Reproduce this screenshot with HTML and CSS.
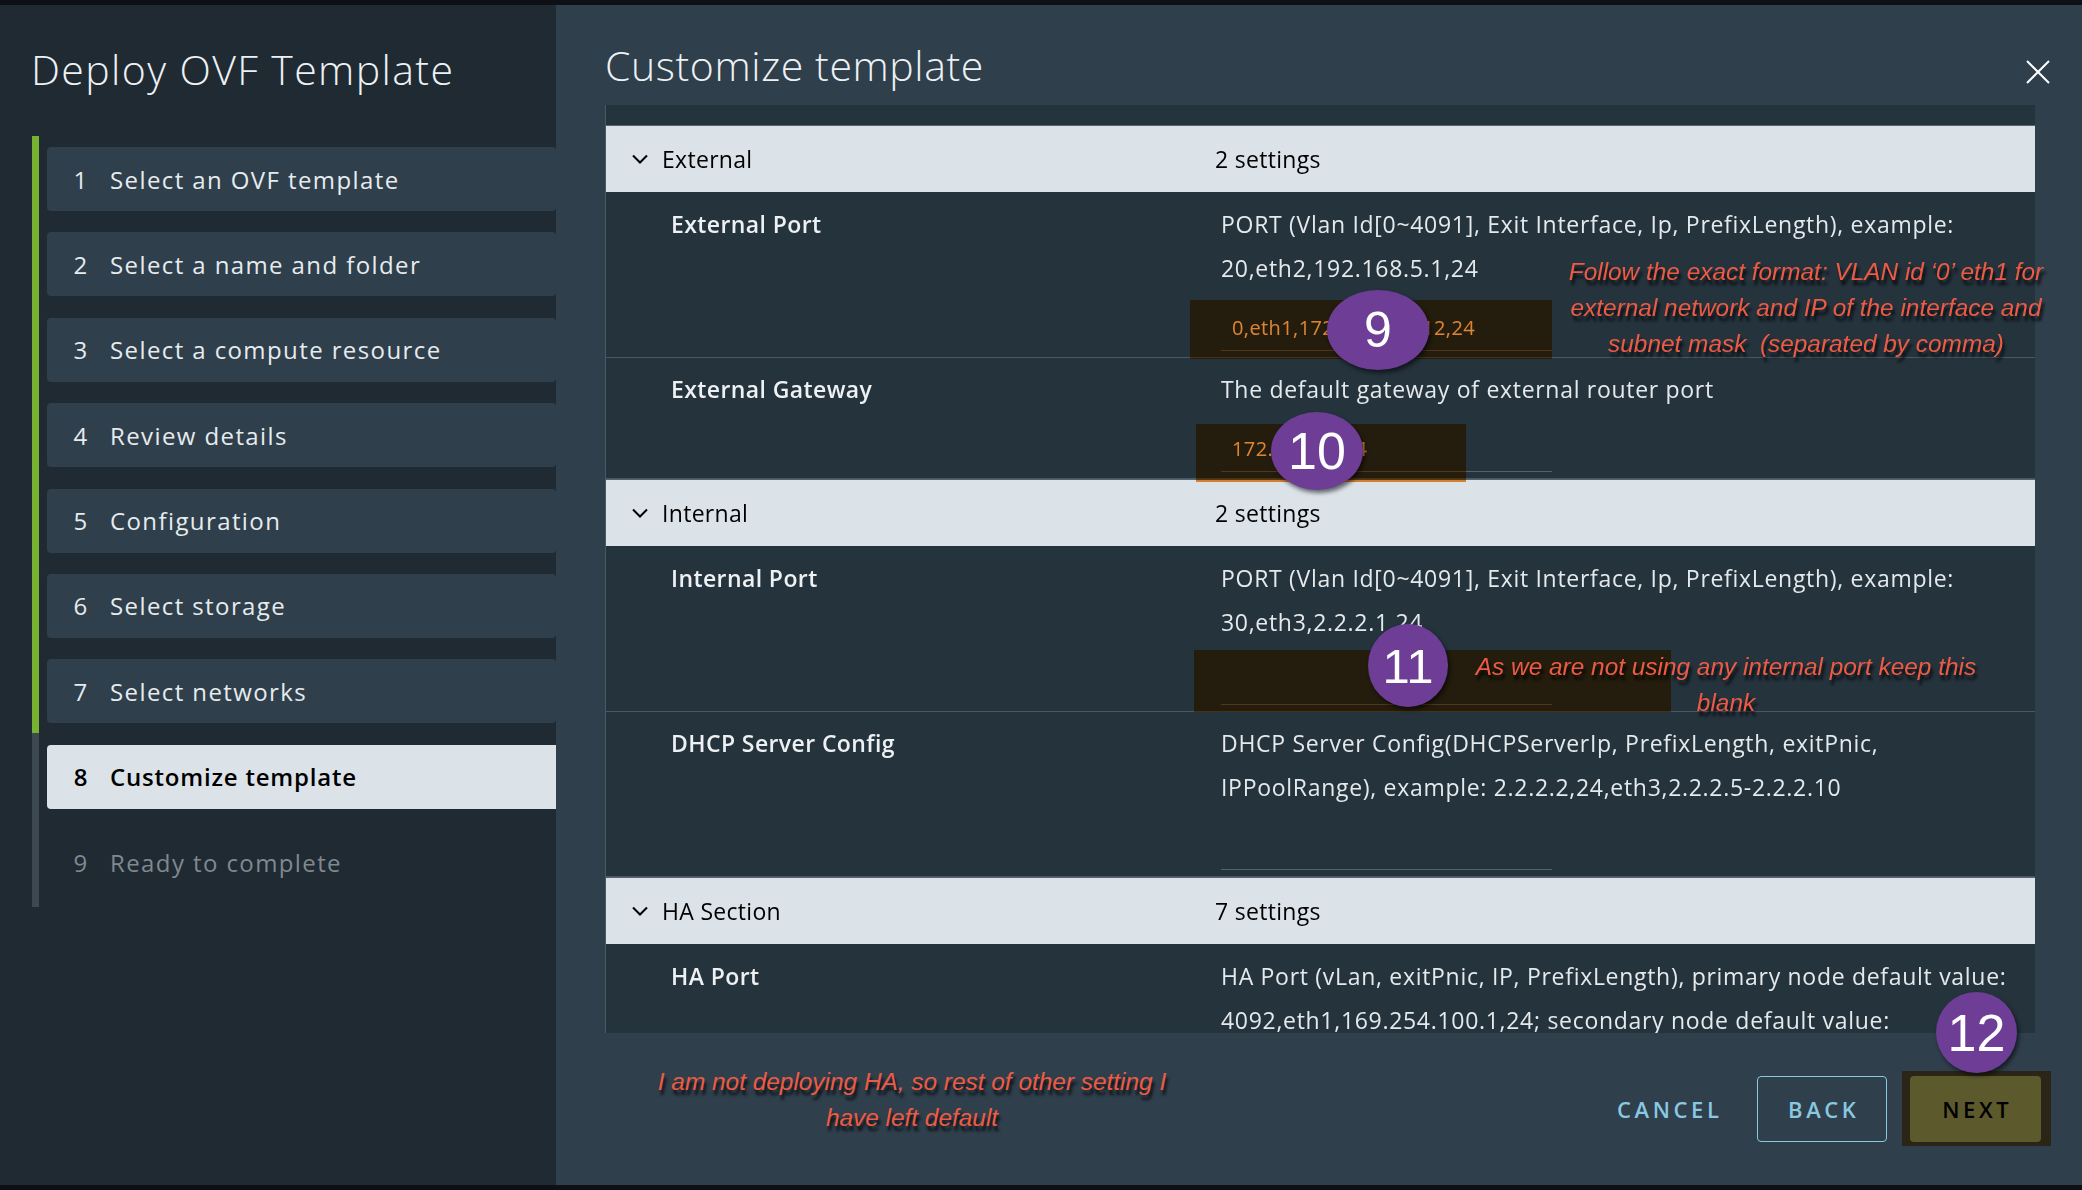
FILE: index.html
```html
<!DOCTYPE html>
<html lang="en">
<head>
<meta charset="utf-8">
<title>Deploy OVF Template</title>
<link rel="stylesheet" href="styles.css">
</head>
<body>
<div class="app">
  <aside class="sidebar">
    <h1 class="wiz-title">Deploy OVF Template</h1>
    <div class="steps">
      <div class="rail"></div>
      <ol class="step-list">
        <li class="step"><span class="num">1</span><span class="lbl">Select an OVF template</span></li>
        <li class="step"><span class="num">2</span><span class="lbl">Select a name and folder</span></li>
        <li class="step"><span class="num">3</span><span class="lbl">Select a compute resource</span></li>
        <li class="step"><span class="num">4</span><span class="lbl">Review details</span></li>
        <li class="step"><span class="num">5</span><span class="lbl">Configuration</span></li>
        <li class="step"><span class="num">6</span><span class="lbl">Select storage</span></li>
        <li class="step"><span class="num">7</span><span class="lbl">Select networks</span></li>
        <li class="step active"><span class="num">8</span><span class="lbl">Customize template</span></li>
        <li class="step pending"><span class="num">9</span><span class="lbl">Ready to complete</span></li>
      </ol>
    </div>
  </aside>

  <main class="panel">
    <header class="panel-head">
      <h2 class="panel-title">Customize template</h2>
      <button class="close" aria-label="Close">
        <svg width="24" height="24" viewBox="0 0 24 24"><path d="M1 1 L23 23 M23 1 L1 23" stroke="#ffffff" stroke-width="2" fill="none"/></svg>
      </button>
    </header>

    <div class="table-wrap">
      <div class="table">
        <div class="table-top"></div>

        <div class="group-head">
          <svg class="chev" width="16" height="10" viewBox="0 0 16 10"><path d="M1 1.5 L8 8.5 L15 1.5" fill="none" stroke="#000" stroke-width="2"/></svg>
          <span class="g-name">External</span>
          <span class="g-count">2 settings</span>
        </div>
        <div class="prop">
          <div class="p-label">External Port</div>
          <div class="p-body">
            <span class="line">PORT (Vlan Id[0~4091], Exit Interface, Ip, PrefixLength), example:</span>
            <span class="line">20,eth2,192.168.5.1,24</span>
            <div class="p-input">0,eth1,172.16.100.112,24</div>
          </div>
        </div>
        <div class="prop">
          <div class="p-label">External Gateway</div>
          <div class="p-body">
            <span class="line">The default gateway of external router port</span>
            <div class="p-input">172.16.10.254</div>
          </div>
        </div>

        <div class="group-head">
          <svg class="chev" width="16" height="10" viewBox="0 0 16 10"><path d="M1 1.5 L8 8.5 L15 1.5" fill="none" stroke="#000" stroke-width="2"/></svg>
          <span class="g-name">Internal</span>
          <span class="g-count">2 settings</span>
        </div>
        <div class="prop">
          <div class="p-label">Internal Port</div>
          <div class="p-body">
            <span class="line">PORT (Vlan Id[0~4091], Exit Interface, Ip, PrefixLength), example:</span>
            <span class="line">30,eth3,2.2.2.1,24</span>
            <div class="p-input"></div>
          </div>
        </div>
        <div class="prop">
          <div class="p-label">DHCP Server Config</div>
          <div class="p-body">
            <span class="line">DHCP Server Config(DHCPServerIp, PrefixLength, exitPnic,</span>
            <span class="line">IPPoolRange), example: 2.2.2.2,24,eth3,2.2.2.5-2.2.2.10</span>
            <div class="p-input"></div>
          </div>
        </div>

        <div class="group-head">
          <svg class="chev" width="16" height="10" viewBox="0 0 16 10"><path d="M1 1.5 L8 8.5 L15 1.5" fill="none" stroke="#000" stroke-width="2"/></svg>
          <span class="g-name">HA Section</span>
          <span class="g-count">7 settings</span>
        </div>
        <div class="prop">
          <div class="p-label">HA Port</div>
          <div class="p-body">
            <span class="line">HA Port (vLan, exitPnic, IP, PrefixLength), primary node default value:</span>
            <span class="line">4092,eth1,169.254.100.1,24; secondary node default value:</span>
            <span class="line">4092,eth1,169.254.100.2,24</span>
            <div class="p-input">4092,eth1,169.254.100.1,24</div>
          </div>
        </div>
      </div>

      <div class="hl hl-9"></div>
      <div class="hl hl-10"></div>
      <div class="hl hl-11"></div>

      <span class="badge badge-9">9</span>
      <span class="badge badge-10">10</span>
      <span class="badge badge-11">11</span>

      <p class="note note-9">Follow the exact format: VLAN id ‘0’ eth1 for<br>external network and IP of the interface and<br>subnet mask&nbsp; (separated by comma)</p>
      <p class="note note-11">As we are not using any internal port keep this<br>blank</p>
    </div>

    <footer class="panel-foot">
      <p class="note note-foot">I am not deploying HA, so rest of other setting I<br>have left default</p>
      <div class="actions">
        <button class="btn btn-flat">CANCEL</button>
        <button class="btn btn-outline">BACK</button>
        <div class="next-hl">
          <button class="btn btn-next">NEXT</button>
          <span class="badge badge-12">12</span>
        </div>
      </div>
    </footer>
  </main>
</div>
</body>
</html>
```

FILE: styles.css
```css
html, body {
  margin: 0;
  padding: 0;
}

body {
  background: #0d1115;
  font-family: "Open Sans", "Noto Sans", sans-serif;
  width: 2082px;
  height: 1190px;
  overflow: hidden;
}

.app {
  display: flex;
  height: 1180px;
  margin-top: 5px;
}

/* ---------- Sidebar ---------- */
.sidebar {
  width: 556px;
  flex: none;
  background: #1f2a33;
  padding-top: 40px;
  box-sizing: border-box;
}

.wiz-title {
  margin: 0 0 42px 31px;
  font-size: 41px;
  font-weight: 300;
  line-height: 49px;
  color: #eef1f3;
  letter-spacing: 1.4px;
}

.steps {
  display: flex;
  margin-left: 32px;
  height: 771px;
}

.rail {
  width: 7px;
  flex: none;
  background: linear-gradient(#78b232 0, #78b232 597px, #3c4951 597px, #3c4951 100%);
}

.step-list {
  list-style: none;
  margin: 0;
  padding: 11px 0 0 8px;
  flex: 1;
  display: flex;
  flex-direction: column;
  gap: 21.4px;
}

.step {
  height: 64px;
  flex: none;
  display: flex;
  align-items: center;
  background: #2f3f4c;
  border-radius: 4px;
  color: #e6ebee;
  font-size: 24px;
  letter-spacing: 1.4px;
  padding-left: 20px;
}

.num {
  width: 28px;
  text-align: center;
  margin-right: 15px;
}

.step.active {
  background: #dbe3e9;
  color: #000;
  font-weight: 600;
  letter-spacing: 0.8px;
  border-radius: 4px 0 0 4px;
}

.step.pending {
  background: none;
  color: #7f898f;
}

/* ---------- Panel ---------- */
.panel {
  flex: 1;
  background: #2f3f4c;
  display: flex;
  flex-direction: column;
  min-width: 0;
}

.panel-head {
  height: 100px;
  flex: none;
  display: flex;
  justify-content: space-between;
  align-items: flex-start;
  padding: 0 32px 0 49px;
}

.panel-title {
  margin: 36px 0 0 0;
  font-size: 41px;
  font-weight: 300;
  line-height: 49px;
  color: #eef1f3;
  letter-spacing: 0.6px;
}

.close {
  margin-top: 55px;
  width: 24px;
  height: 24px;
  padding: 0;
  border: 0;
  background: none;
  display: block;
}

.close svg { display: block; }

.table-wrap {
  position: relative;
  isolation: isolate;
  height: 928px;
  flex: none;
  margin: 0 47px 0 49px;
}

.table {
  height: 100%;
  overflow: hidden;
  background: #25333d;
  border-left: 1px solid #4a5863;
}

.table-top {
  height: 20px;
}

.group-head {
  height: 66px;
  border-top: 1px solid #56646e;
  background: #dbe3e9;
  display: flex;
  align-items: center;
  color: #000;
  font-size: 23px;
  font-weight: 500;
  letter-spacing: 0.3px;
}

.chev {
  margin-left: 26px;
  margin-right: 14px;
  flex: none;
}

.g-name {
  width: 553px;
}

.prop {
  display: flex;
  padding: 9.5px 0 6px;
  border-bottom: 1px solid #4a5863;
}

.p-label {
  margin-left: 65px;
  width: 550px;
  flex: none;
  font-size: 23px;
  font-weight: 600;
  line-height: 44px;
  color: #eef1f3;
  letter-spacing: 0.4px;
}

.p-body {
  font-size: 23px;
  line-height: 44px;
  color: #e4e9ec;
  letter-spacing: 0.7px;
}

.line {
  display: block;
  white-space: nowrap;
}

.p-input {
  margin-top: 16px;
  width: 320px;
  height: 44px;
  padding-left: 11px;
  border-bottom: 1px solid #56636d;
  font-size: 20px;
  line-height: 44px;
  color: #e6eaed;
  letter-spacing: 0.4px;
  white-space: nowrap;
  overflow: hidden;
}

/* ---------- Annotations ---------- */
.hl {
  position: absolute;
  background: #f58f36;
  mix-blend-mode: multiply;
}

.hl-9  { left: 585px; top: 195px; width: 362px; height: 59px; }
.hl-10 { left: 591px; top: 319px; width: 270px; height: 58px; }
.hl-11 { left: 589px; top: 545px; width: 477px; height: 62px; }

.badge {
  position: absolute;
  display: flex;
  align-items: center;
  justify-content: center;
  background: #6e3d96;
  border-radius: 50%;
  color: #ffffff;
  font-family: "Liberation Sans", Arial, sans-serif;
  box-shadow: 2px 3px 4px rgba(0, 0, 0, 0.55);
  z-index: 2;
}

.badge-9  { left: 722px; top: 185px; width: 102px; height: 80px; font-size: 50px; }
.badge-10 { left: 666px; top: 307px; width: 92px;  height: 78px; font-size: 52px; }
.badge-11 { left: 763px; top: 519px; width: 80px;  height: 83px; font-size: 49px; }
.badge-12 { left: 34px;  top: -79px; width: 81px;  height: 81px; font-size: 52px; }

.note {
  margin: 0;
  font-family: "Liberation Sans Narrow", "Liberation Sans", Arial, sans-serif;
  font-style: italic;
  font-size: 24.4px;
  line-height: 36px;
  color: #ee5b45;
  text-align: center;
  text-shadow: 2px 5px 3px rgba(0, 0, 0, 0.8);
  white-space: nowrap;
}

.note-9 {
  position: absolute;
  left: 941px;
  top: 149px;
  width: 520px;
  z-index: 3;
}

.note-11 {
  position: absolute;
  left: 851px;
  top: 544px;
  width: 540px;
  z-index: 3;
}

/* ---------- Footer ---------- */
.panel-foot {
  flex: 1;
  display: flex;
  align-items: flex-start;
  padding: 0 31px 0 49px;
}

.note-foot {
  margin: 31px 0 0 47px;
  width: 520px;
}

.actions {
  margin-left: auto;
  margin-top: 38px;
  display: flex;
  align-items: center;
}

.btn {
  font-family: "Open Sans", "Noto Sans", sans-serif;
  font-size: 22px;
  font-weight: 600;
  letter-spacing: 3.6px;
  text-indent: 3.6px;
  height: 66px;
  width: 130px;
  padding: 0;
  border-radius: 4px;
  cursor: pointer;
}

.btn-flat {
  background: none;
  border: 0;
  color: #89c8e0;
  margin-right: 24px;
}

.btn-outline {
  background: none;
  border: 1px solid #89c8e0;
  color: #89c8e0;
  margin-right: 15px;
}

.next-hl {
  position: relative;
  background: #2a2516;
  padding: 5px 10px 4px 8px;
}

.btn-next {
  display: block;
  width: 131px;
  background: #5c5a2d;
  border: 0;
  color: #000;
}
```
